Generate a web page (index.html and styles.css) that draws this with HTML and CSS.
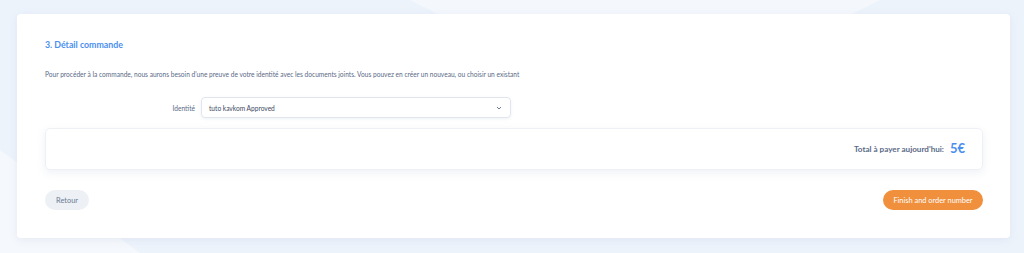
FILE: index.html
```html
<!DOCTYPE html>
<html lang="fr">
<head>
<meta charset="utf-8">
<title>Détail commande</title>
<link rel="stylesheet" href="styles.css">
</head>
<body>
<div class="bg-shape"></div>
<div class="bg-shape2"></div>
<main class="card">
  <h2 class="title">3. Détail commande</h2>
  <p class="intro">Pour procéder à la commande, nous aurons besoin d'une preuve de votre identité avec les documents joints. Vous pouvez en créer un nouveau, ou choisir un existant</p>
  <div class="field">
    <label class="field-label">Identité</label>
    <div class="select">
      <span>tuto kavkom Approved</span>
      <svg class="chev" width="6" height="4" viewBox="0 0 6 4"><path d="M1 1l2 2 2-2" fill="none" stroke="#6b7a93" stroke-width="1"/></svg>
    </div>
  </div>
  <div class="total">
    <span class="total-label">Total à payer aujourd'hui:</span>
    <span class="total-amount">5€</span>
  </div>
  <div class="actions">
    <button class="btn btn-back">Retour</button>
    <button class="btn btn-finish">Finish and order number</button>
  </div>
</main>
</body>
</html>
```
FILE: styles.css
```css
html, body { margin: 0; }
body {
  background: #edf3fb;
  padding: 14px 14px 15px 17px;
  font-family: Lato, "Noto Sans", sans-serif;
  position: relative;
  overflow: hidden;
  height: 253px;
  box-sizing: border-box;
}
.bg-shape {
  position: absolute;
  left: 410px; top: 0;
  width: 470px; height: 14px;
  background: #f4f8fd;
  clip-path: polygon(0 0, 100% 0, 94% 100%, 6% 100%);
}
.bg-shape2 {
  position: absolute;
  left: 0; top: 150px;
  width: 140px; height: 103px;
  background: #f5f8fc;
  clip-path: polygon(0 0, 100% 100%, 0 100%);
}
.card {
  position: relative;
  width: 993px;
  height: 224px;
  box-sizing: border-box;
  background: #fff;
  border-radius: 4px;
  padding: 25px 27px 0 28px;
  box-shadow: 0 2px 8px rgba(120, 150, 190, 0.12);
}
.title {
  margin: 0;
  font-size: 8.8px;
  line-height: 12px;
  font-weight: 700;
  color: #4a8ff0;
}
.intro {
  margin: 17px 0 0;
  font-size: 6.6px;
  line-height: 12px;
  color: #5a6a86;
  white-space: nowrap;
}
.field {
  margin-top: 17px;
  display: flex;
  align-items: center;
  gap: 6px;
}
.field-label {
  width: 150px;
  text-align: right;
  font-size: 6.6px;
  color: #5a6a86;
}
.select {
  width: 310px;
  height: 21px;
  box-sizing: border-box;
  border: 1.5px solid #e1e6ee;
  border-radius: 4px;
  display: flex;
  align-items: center;
  justify-content: space-between;
  padding: 0 8px 0 7px;
  font-size: 6.6px;
  color: #3d4a63;
  box-shadow: 0 1px 3px rgba(120, 140, 170, 0.12);
}
.chev { margin-top: 1px; }
.total {
  margin-top: 10px;
  height: 42px;
  box-sizing: border-box;
  border: 1px solid #edf1f6;
  border-radius: 5px;
  box-shadow: 0 3px 8px rgba(120, 140, 170, 0.12);
  display: flex;
  align-items: center;
  justify-content: flex-end;
  gap: 6px;
  padding-right: 17px;
}
.total-label {
  font-size: 8.1px;
  font-weight: 700;
  color: #5a6a86;
}
.total-amount {
  font-size: 13px;
  font-weight: 700;
  color: #4a8ff0;
  margin-top: -2px;
}
.actions {
  margin-top: 20px;
  display: flex;
  justify-content: space-between;
}
.btn {
  height: 20px;
  border: none;
  border-radius: 10px;
  font-family: inherit;
  font-size: 7.4px;
  padding: 0;
}
.btn-back {
  width: 44px;
  background: #edf0f5;
  color: #6b7a93;
}
.btn-finish {
  width: 100px;
  background: #f0903d;
  color: #fff;
}
```
